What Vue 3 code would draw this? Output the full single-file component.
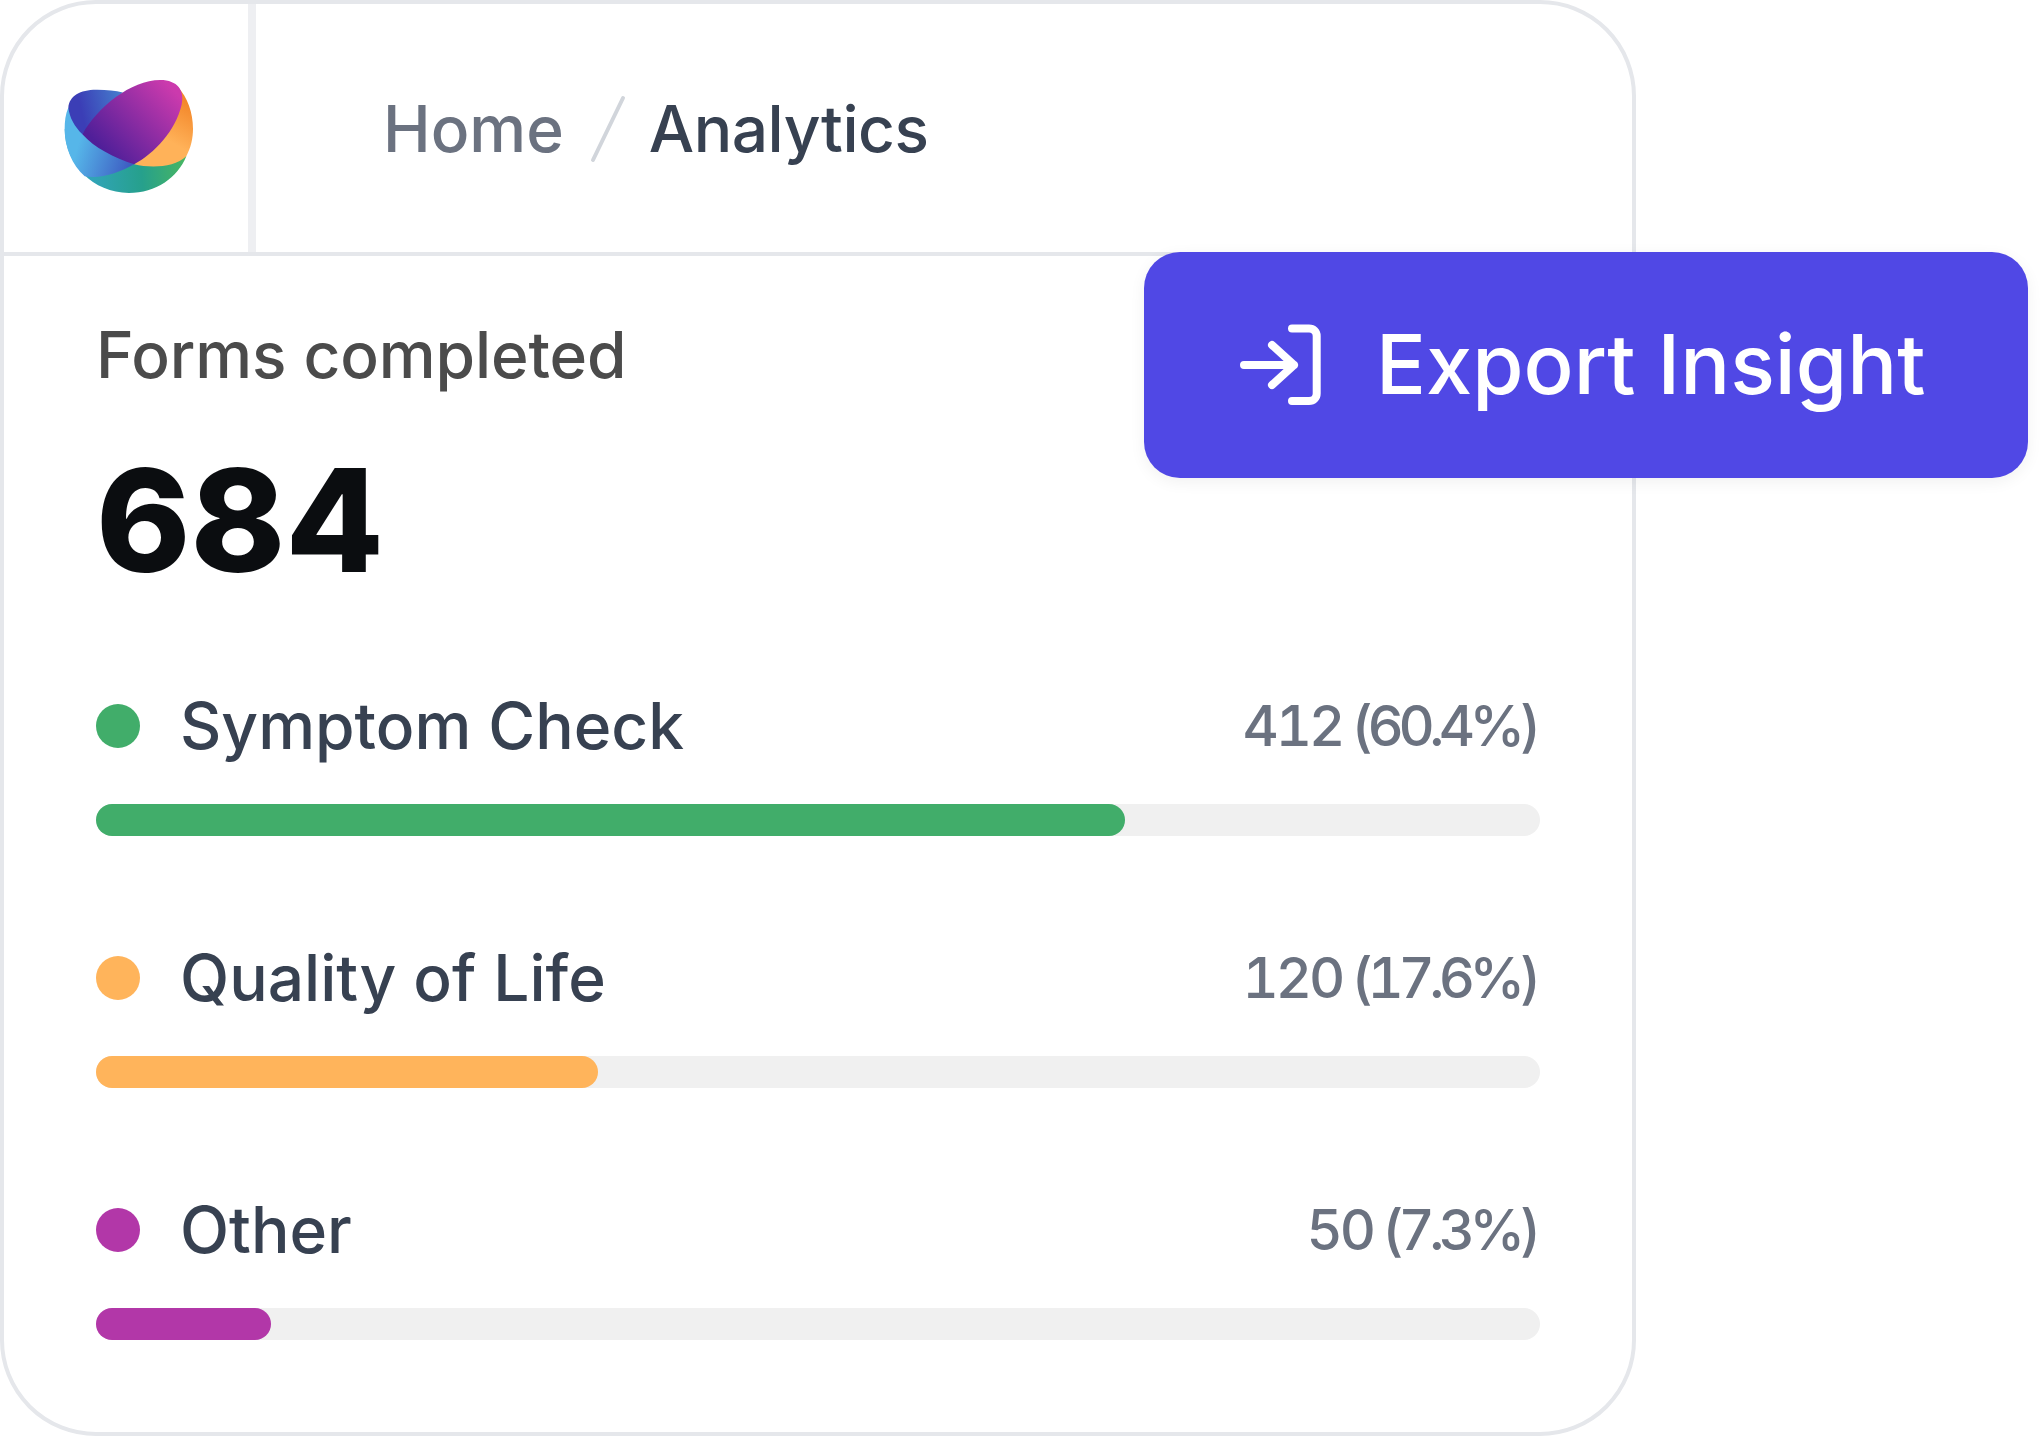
<template>
  <div class="page">
    <div class="card">
      <header class="top">
        <div class="logo-cell">
          <svg class="logo" viewBox="190 238 386 338" width="129" height="113">
            <defs>
              <linearGradient id="g-bowl" x1="230" y1="520" x2="550" y2="500" gradientUnits="userSpaceOnUse">
                <stop offset="0" stop-color="#34A5C4" />
                <stop offset="0.6" stop-color="#26A08C" />
                <stop offset="1" stop-color="#47B564" />
              </linearGradient>
              <linearGradient id="g-sky" x1="230" y1="440" x2="390" y2="490" gradientUnits="userSpaceOnUse">
                <stop offset="0" stop-color="#56B6E9" />
                <stop offset="1" stop-color="#3D5CC2" />
              </linearGradient>
              <linearGradient id="g-navy" x1="240" y1="320" x2="370" y2="290" gradientUnits="userSpaceOnUse">
                <stop offset="0" stop-color="#3B3EB6" />
                <stop offset="1" stop-color="#4680CE" />
              </linearGradient>
              <linearGradient id="g-leaf" x1="310" y1="450" x2="510" y2="260" gradientUnits="userSpaceOnUse">
                <stop offset="0" stop-color="#501F99" />
                <stop offset="1" stop-color="#CB3AAD" />
              </linearGradient>
              <linearGradient id="g-orange" x1="570" y1="310" x2="480" y2="470" gradientUnits="userSpaceOnUse">
                <stop offset="0" stop-color="#F3872A" />
                <stop offset="0.7" stop-color="#FFB259" />
              </linearGradient>
            </defs>
            <path d="M192 384C192 490 278 576 384 576C465 576 530 530 556 466L400 400L250 500Z" fill="url(#g-bowl)" />
            <path d="M530 258C560 290 576 335 576 384C576 412 570 440 556 466C520 500 450 502 400 490L520 300Z" fill="url(#g-orange)" />
            <path d="M203 320C194 340 192 362 192 384C192 440 214 492 252 526C300 535 355 515 400 490L245 380Z" fill="url(#g-sky)" />
            <path d="M203 320C206 285 240 266 290 267C318 267 345 270 366 275L300 340L245 400C222 378 206 350 203 320Z" fill="url(#g-navy)" />
            <path d="M245 400C290 320 390 238 478 238C530 238 552 270 542 312C524 390 460 458 400 490C340 470 280 440 245 400Z" fill="url(#g-leaf)" />
          </svg>
        </div>
        <nav class="crumbs">
          <span class="crumb-home">Home</span>
          <svg class="crumb-slash" viewBox="0 0 36 68" width="36" height="68">
            <path d="M33 3L3 65" stroke="#d1d5db" stroke-width="4" stroke-linecap="round" />
          </svg>
          <span class="crumb-current">Analytics</span>
        </nav>
      </header>

      <section class="body">
        <div class="forms-label">Forms completed</div>
        <div class="forms-total">684</div>
        <ul class="rows">
          <li v-for="row in rows" :key="row.name" class="row">
            <div class="row-head">
              <span class="dot" :style="{ background: row.color }"></span>
              <span class="row-name">{{ row.name }}</span>
              <span class="row-count">{{ row.count }}</span>
              <span class="row-pct">{{ row.pct }}</span>
            </div>
            <div class="track">
              <div class="fill" :style="{ width: row.width + 'px', background: row.color }"></div>
            </div>
          </li>
        </ul>
      </section>
    </div>

    <button class="export">
      <svg class="export-icon" viewBox="0 0 84 84" width="84" height="84">
        <path d="M6 42H56M34 22L56 42L34 62M54 5.5H71C75.5 5.5 78.7 8.7 78.7 13V70.5C78.7 75 75.5 78 71 78H54" fill="none" stroke="#fff" stroke-width="8" stroke-linecap="round" stroke-linejoin="round" />
      </svg>
      <span class="export-label">Export Insight</span>
    </button>
  </div>
</template>

<script setup>
const rows = [
  { name: 'Symptom Check', count: '412', pct: '(60.4%)', color: '#41AD6A', width: 1029 },
  { name: 'Quality of Life', count: '120', pct: '(17.6%)', color: '#FFB45B', width: 502 },
  { name: 'Other', count: '50', pct: '(7.3%)', color: '#B237A8', width: 175 },
]
</script>

<style scoped>
.page {
  position: relative;
  width: 2040px;
  height: 1436px;
  background: #fff;
  font-family: Inter, 'Liberation Sans', sans-serif;
  overflow: hidden;
}
.card {
  width: 1636px;
  height: 1436px;
  box-sizing: border-box;
  border: 4px solid #e5e7eb;
  border-radius: 96px;
  overflow: hidden;
}
.top {
  display: flex;
  align-items: center;
  height: 248px;
  box-sizing: content-box;
  border-bottom: 4px solid #e5e7eb;
}
.logo-cell {
  width: 252px;
  height: 100%;
  box-sizing: border-box;
  border-right: 8px solid #eeeff2;
  padding: 76px 0 0 60px;
}
.logo {
  display: block;
}
.crumbs {
  display: flex;
  align-items: center;
  margin-left: 127px;
  padding-top: 2px;
  font-size: 64px;
  line-height: 76px;
  font-weight: 500;
}
.crumb-home {
  color: #6b7280;
}
.crumb-slash {
  margin: 0 23px 0 26px;
}
.crumb-current {
  color: #374151;
  letter-spacing: -0.45px;
}
.body {
  padding: 61px 92px 0;
}
.forms-label {
  font-size: 64px;
  line-height: 76px;
  font-weight: 500;
  letter-spacing: -0.1px;
  color: #4b4b4b;
}
.forms-total {
  margin-top: 41px;
  font-size: 143px;
  line-height: 172px;
  font-weight: 800;
  color: #0b0d10;
}
.rows {
  list-style: none;
  margin: 82px 0 0;
  padding: 0;
}
.row {
  margin-bottom: 104px;
}
.row-head {
  display: flex;
  align-items: center;
  height: 76px;
  margin-bottom: 40px;
}
.dot {
  width: 44px;
  height: 44px;
  border-radius: 50%;
  margin-right: 40px;
}
.row-name {
  flex: 1;
  font-size: 64px;
  line-height: 76px;
  font-weight: 500;
  color: #374151;
}
.row-count,
.row-pct {
  font-size: 56px;
  line-height: 76px;
  font-weight: 500;
  color: #6b7280;
  font-variant-numeric: tabular-nums;
}
.row-count {
  letter-spacing: -3px;
}
.row-pct {
  letter-spacing: -5.5px;
  margin-left: 9px;
  margin-right: 4px;
}
.track {
  width: 1444px;
  height: 32px;
  border-radius: 16px;
  background: #f0f0f0;
}
.fill {
  height: 100%;
  border-radius: 16px;
}
.export {
  position: absolute;
  left: 1144px;
  top: 252px;
  width: 884px;
  height: 226px;
  display: flex;
  align-items: center;
  padding: 0 0 0 94px;
  gap: 54px;
  border: none;
  border-radius: 36px;
  background: #5048e5;
  box-shadow: 0 4px 16px rgba(0, 0, 0, 0.06);
  color: #fff;
  font-family: inherit;
  font-size: 83px;
  font-weight: 500;
}
.export-icon {
  flex: none;
}
.export-label {
  margin-bottom: 2px;
}
</style>
